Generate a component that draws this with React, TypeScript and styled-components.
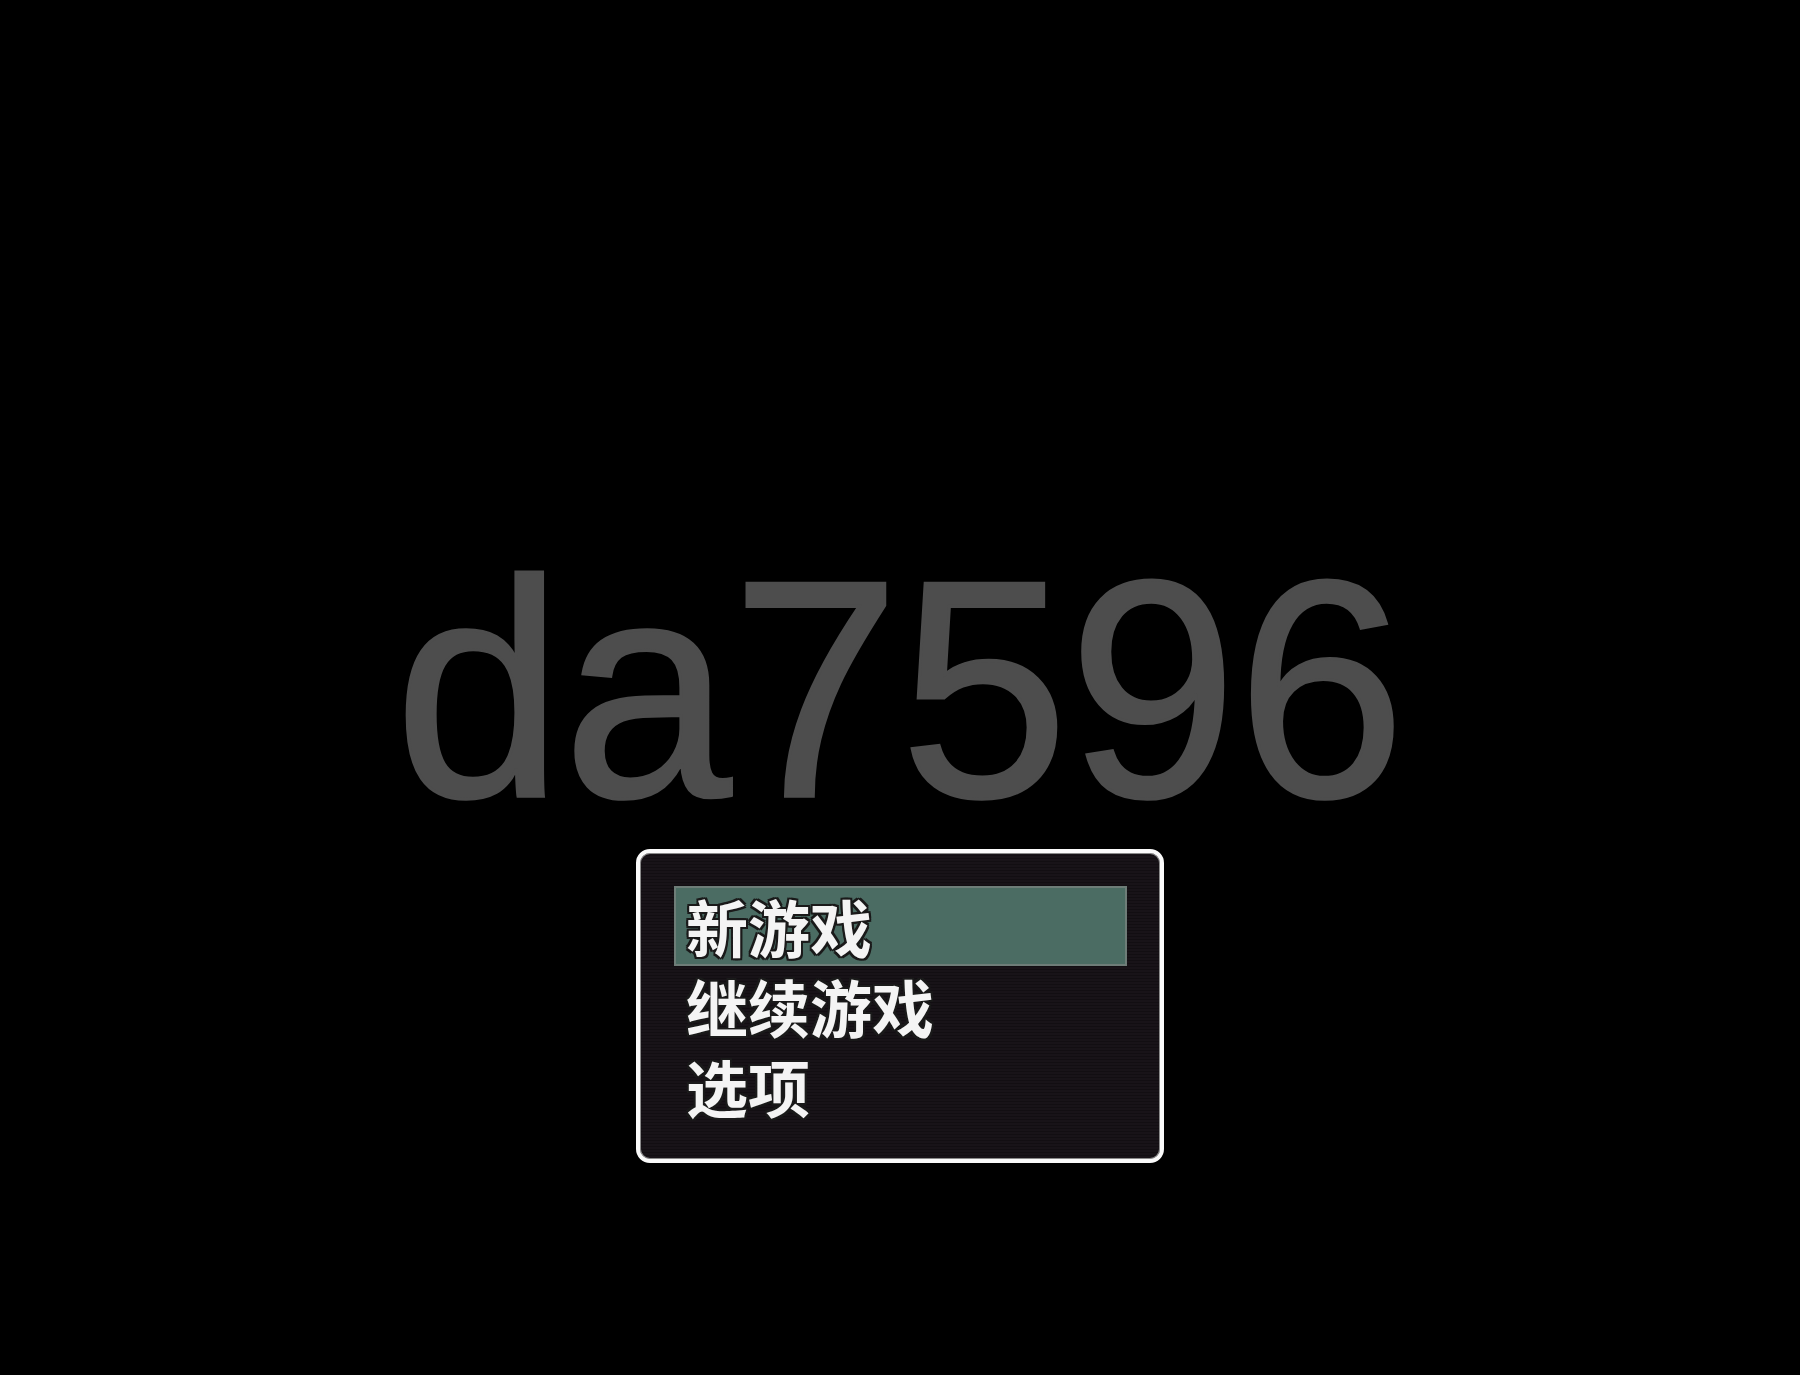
import React from 'react';
import styled, { createGlobalStyle } from 'styled-components';

const GlobalStyle = createGlobalStyle`
  html, body {
    margin: 0;
    padding: 0;
    background: #000;
  }
`;

const Screen = styled.div`
  width: 1800px;
  height: 1375px;
  background: #000;
  display: flex;
  flex-direction: column;
  align-items: center;
  overflow: hidden;
`;

const Title = styled.h1`
  margin: 0;
  margin-top: 530px;
  font-family: "Liberation Sans", Arial, sans-serif;
  font-weight: 400;
  font-size: 303px;
  line-height: 319px;
  color: #4d4d4d;
  -webkit-text-stroke: 3px #4d4d4d;
  letter-spacing: 0;
  transform: scaleY(1.022);
`;

const MenuBox = styled.div`
  width: 528px;
  box-sizing: border-box;
  padding: 33px 33px 33px 34px;
  border: 4px solid #fafafa;
  border-radius: 14px;
  background: repeating-linear-gradient(
    to bottom,
    #181318 0px,
    #181318 2px,
    #120e12 2px,
    #120e12 3px
  );
  box-shadow: inset 0 0 0 1px #8a8a8a;
`;

const MenuItem = styled.div<{ $active?: boolean }>`
  height: 80px;
  box-sizing: border-box;
  display: flex;
  align-items: center;
  padding-left: 10px;
  font-family: "Noto Sans CJK SC", sans-serif;
  font-weight: 700;
  font-size: 62px;
  line-height: 1;
  color: #f4f4f4;
  text-shadow:
    2px 0 0 #1a1a1a, -2px 0 0 #1a1a1a, 0 2px 0 #1a1a1a, 0 -2px 0 #1a1a1a,
    2px 2px 0 #1a1a1a, -2px -2px 0 #1a1a1a, 2px -2px 0 #1a1a1a, -2px 2px 0 #1a1a1a;
  background: ${(p) => (p.$active ? '#4b6c63' : 'transparent')};
  border: 2px solid ${(p) => (p.$active ? '#6e7d78' : 'transparent')};
`;

const items = ['新游戏', '继续游戏', '选项'];

const App: React.FC = () => {
  return (
    <>
      <GlobalStyle />
      <Screen>
        <Title>da7596</Title>
        <MenuBox>
          {items.map((label, i) => (
            <MenuItem key={label} $active={i === 0}>
              {label}
            </MenuItem>
          ))}
        </MenuBox>
      </Screen>
    </>
  );
};

export default App;
